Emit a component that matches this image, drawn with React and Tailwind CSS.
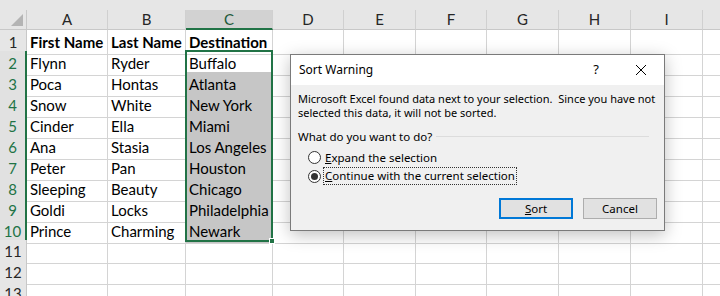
import React from 'react';

const COLS = ['A', 'B', 'C', 'D', 'E', 'F', 'G', 'H', 'I', ''];
const ROWS = [
  ['First Name', 'Last Name', 'Destination'],
  ['Flynn', 'Ryder', 'Buffalo'],
  ['Poca', 'Hontas', 'Atlanta'],
  ['Snow', 'White', 'New York'],
  ['Cinder', 'Ella', 'Miami'],
  ['Ana', 'Stasia', 'Los Angeles'],
  ['Peter', 'Pan', 'Houston'],
  ['Sleeping', 'Beauty', 'Chicago'],
  ['Goldi', 'Locks', 'Philadelphia'],
  ['Prince', 'Charming', 'Newark'],
  ['', '', ''],
  ['', '', ''],
  ['', '', ''],
];

const gridCols = 'grid grid-cols-[27px_81px_78px_87px_71px_72px_71px_72px_72px_72px_17px]';

function Radio({ checked }) {
  return (
    <span className="w-[13px] h-[13px] rounded-full border border-[#333] bg-white flex items-center justify-center shrink-0">
      {checked && <span className="w-[7px] h-[7px] rounded-full bg-[#333]" />}
    </span>
  );
}

export default function App() {
  return (
    <div className="relative w-[720px] h-[296px] overflow-hidden bg-white font-['Lato',sans-serif] text-[15px] text-black">
      <div className="h-[10px] bg-[#e6e6e6]" />
      <div className={`${gridCols} h-[20px] bg-[#e6e6e6]`}>
        <div className="relative border-r border-b border-[#c8c8c8]">
          <span className="absolute right-[3px] bottom-[3px] w-0 h-0 border-l-[12px] border-l-transparent border-b-[12px] border-b-[#b4b4b4]" />
        </div>
        {COLS.map((c, i) => (
          <div
            key={i}
            className={`flex items-center justify-center text-[15px] leading-none ${c === 'C' ? 'bg-[#d2d2d2] text-[#1e5a3a] border-b-2 border-b-[#217346]' : 'text-[#262626] border-b border-[#c8c8c8]'} ${i < COLS.length - 1 ? 'border-r border-r-[#d0d0d0]' : ''}`}
          >
            {c}
          </div>
        ))}
      </div>
      {ROWS.map((r, ri) => {
        const n = ri + 1;
        const sel = n >= 2 && n <= 10;
        return (
          <div key={ri} className={`${gridCols} h-[21px]`}>
            <div
              className={`flex items-center justify-center text-[15px] border-b border-[#d4d4d4] ${sel ? 'bg-[#e1e1e1] text-[#217346] border-r-2 border-r-[#217346]' : 'bg-[#e6e6e6] text-[#262626] border-r border-r-[#c8c8c8]'}`}
            >
              {n}
            </div>
            {COLS.map((c, ci) => {
              const txt = ci < 3 ? r[ci] : '';
              const shade = ci === 2 && n >= 3 && n <= 10;
              return (
                <div
                  key={ci}
                  className={`flex items-center pl-[3px] pt-[1px] whitespace-nowrap overflow-visible border-b border-[#d4d4d4] ${ci < COLS.length - 1 ? 'border-r border-r-[#d4d4d4]' : ''} ${shade ? 'bg-[#c6c6c6]' : ''} ${n === 1 ? 'font-bold' : ''}`}
                >
                  {txt}
                </div>
              );
            })}
          </div>
        );
      })}

      {/* selection outline */}
      <div className="absolute left-[185px] top-[50px] w-[88px] h-[192px] border-2 border-[#217346] pointer-events-none" />
      <div className="absolute left-[269px] top-[238px] w-[6px] h-[6px] bg-[#217346] border border-white" />

      {/* dialog */}
      <div className="absolute left-[290px] top-[54px] w-[375px] h-[177px] border border-[#7a7a7a] bg-[#f0f0f0] shadow-[0_4px_16px_rgba(0,0,0,0.25)] font-['Noto_Sans',sans-serif] text-[11.5px] text-black flex flex-col">
        <div className="h-[30px] bg-white flex items-center pl-[8px] shrink-0">
          <span className="flex-1 text-[12px]">Sort Warning</span>
          <span className="w-[20px] text-center text-[13px] mr-[29px]">?</span>
          <svg width="12" height="12" viewBox="0 0 12 12" className="mr-[17px]">
            <path d="M1 1L11 11M11 1L1 11" stroke="#000" strokeWidth="1" />
          </svg>
        </div>
        <div className="flex-1 flex flex-col px-[7px] pt-[7px]">
          <p className="text-[11px] leading-[13.5px] whitespace-nowrap">
            Microsoft Excel found data next to your selection.&nbsp; Since you have not
            <br />
            selected this data, it will not be sorted.
          </p>
          <div className="flex items-center mt-[9px] mr-[8px]">
            <span>What do you want to do?</span>
            <span className="flex-1 ml-[4px] border-t border-[#dcdcdc]" />
          </div>
          <div className="flex items-center gap-[4px] ml-[10px] mt-[3px] h-[18px]">
            <Radio />
            <span><span className="underline">E</span>xpand the selection</span>
          </div>
          <div className="flex items-center gap-[3px] ml-[10px] mt-[1px] h-[18px]">
            <Radio checked />
            <span className="outline-1 outline-dotted outline-[#333] px-[1px] leading-[16px]"><span className="underline">C</span>ontinue with the current selection</span>
          </div>
          <div className="flex justify-end gap-[10px] mt-[13px]">
            <button className="w-[74px] h-[21px] border-2 border-[#0078d7] bg-[#e1e1e1] flex items-center justify-center">
              <span><span className="underline">S</span>ort</span>
            </button>
            <button className="w-[74px] h-[21px] border border-[#adadad] bg-[#e1e1e1] flex items-center justify-center">
              Cancel
            </button>
          </div>
        </div>
      </div>
    </div>
  );
}
